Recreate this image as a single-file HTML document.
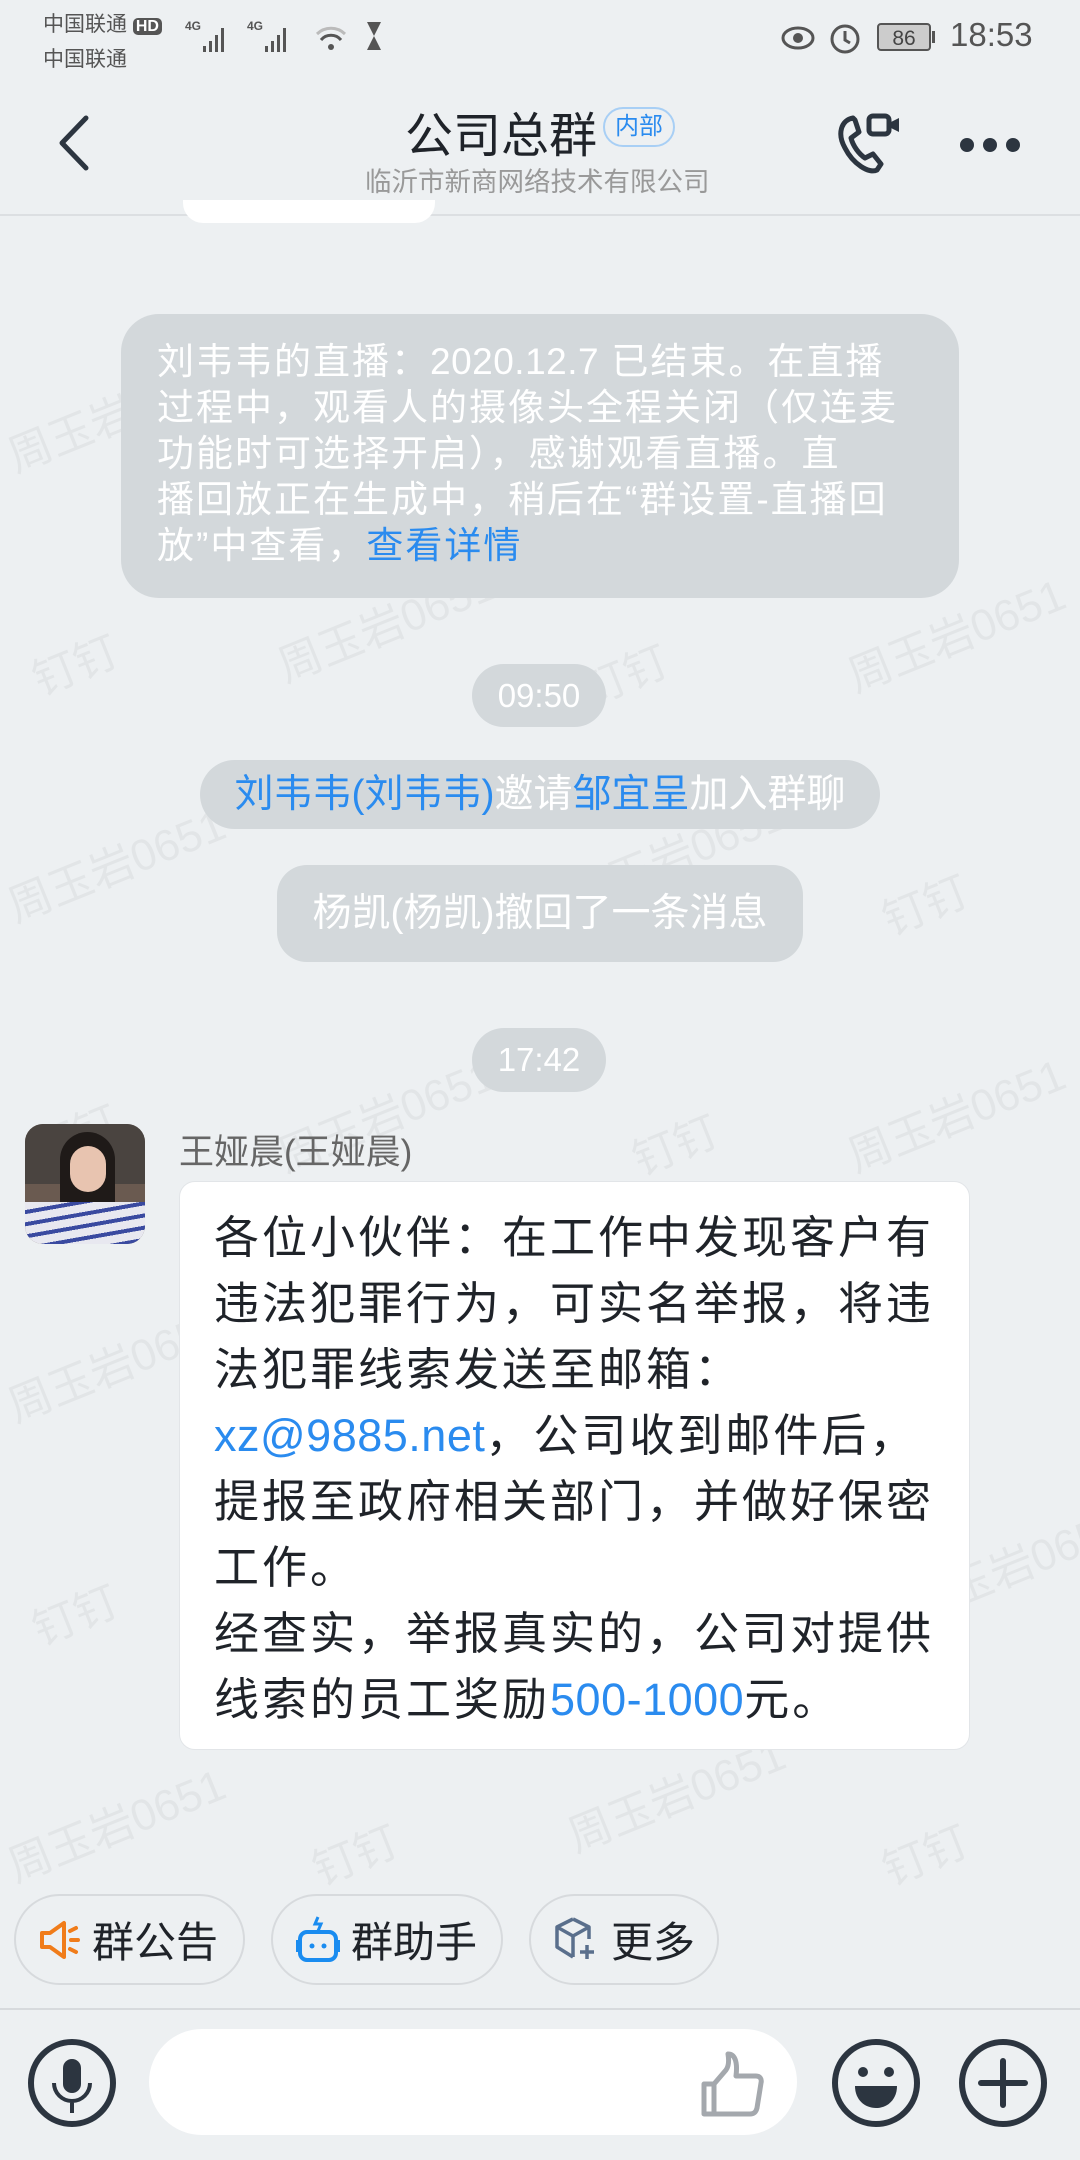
<!DOCTYPE html>
<html><head><meta charset="utf-8">
<style>
*{margin:0;padding:0;box-sizing:border-box}
body{width:1080px;height:2160px;background:#edf0f2;font-family:"Liberation Sans","Noto Sans CJK SC",sans-serif;position:relative;overflow:hidden;color:#1f2329}
.a{position:absolute}
.wm{position:absolute;color:rgba(0,0,0,0.045);font-size:44px;transform:rotate(-22deg);white-space:nowrap}
.pill{position:absolute;background:#d3d8db;color:#fff;text-align:center;white-space:nowrap}
.blue{color:#2a8bef}
.l{letter-spacing:0.5px}
.chip{position:absolute;top:1894px;height:91px;border:2px solid #d7dadd;border-radius:46px;font-size:42px;display:flex;align-items:center;color:#1f2329}
</style></head><body>

<div class="wm" style="left:0;top:380px">周玉岩0651</div>
<div class="wm" style="left:860px;top:390px">钉钉</div>
<div class="wm" style="left:30px;top:630px">钉钉</div>
<div class="wm" style="left:270px;top:590px">周玉岩0651</div>
<div class="wm" style="left:580px;top:640px">钉钉</div>
<div class="wm" style="left:840px;top:600px">周玉岩0651</div>
<div class="wm" style="left:0;top:830px">周玉岩0651</div>
<div class="wm" style="left:310px;top:870px">钉钉</div>
<div class="wm" style="left:560px;top:820px">周玉岩0651</div>
<div class="wm" style="left:880px;top:870px">钉钉</div>
<div class="wm" style="left:30px;top:1100px">钉钉</div>
<div class="wm" style="left:270px;top:1080px">周玉岩0651</div>
<div class="wm" style="left:630px;top:1110px">钉钉</div>
<div class="wm" style="left:840px;top:1080px">周玉岩0651</div>
<div class="wm" style="left:0;top:1330px">周玉岩0651</div>
<div class="wm" style="left:30px;top:1580px">钉钉</div>
<div class="wm" style="left:900px;top:1530px">周玉岩0651</div>
<div class="wm" style="left:0;top:1790px">周玉岩0651</div>
<div class="wm" style="left:310px;top:1820px">钉钉</div>
<div class="wm" style="left:560px;top:1760px">周玉岩0651</div>
<div class="wm" style="left:880px;top:1820px">钉钉</div>

<div class="a" style="left:43px;top:8px;font-size:21px;color:#555;line-height:33px">中国联通 <span style="background:#555;color:#fff;border-radius:5px;font-size:16px;padding:0 3px;font-weight:bold">HD</span><br>中国联通</div>
<svg class="a" style="left:185px;top:16px" width="210" height="40" viewBox="0 0 210 40">
<text x="0" y="14" font-size="12" font-weight="bold" fill="#555" font-family="Liberation Sans">4G</text>
<rect x="18" y="30" width="3" height="6" fill="#555"/><rect x="24" y="25" width="3" height="11" fill="#555"/><rect x="30" y="19" width="3" height="17" fill="#555"/><rect x="36" y="12" width="3" height="24" fill="#555"/>
<text x="62" y="14" font-size="12" font-weight="bold" fill="#555" font-family="Liberation Sans">4G</text>
<rect x="80" y="30" width="3" height="6" fill="#555"/><rect x="86" y="25" width="3" height="11" fill="#555"/><rect x="92" y="19" width="3" height="17" fill="#555"/><rect x="98" y="12" width="3" height="24" fill="#555"/>
<path d="M132 18 a20 20 0 0 1 28 0" stroke="#bbb" stroke-width="3" fill="none"/><path d="M136 24 a13 13 0 0 1 20 0" stroke="#555" stroke-width="3" fill="none"/><circle cx="146" cy="31" r="3" fill="#555"/>
<path d="M182 6 h14 l-7 14 l7 14 h-14 l7 -14z" fill="#555"/>
</svg>
<svg class="a" style="left:778px;top:18px" width="165" height="40" viewBox="0 0 165 40">
<ellipse cx="20" cy="20" rx="15" ry="10" stroke="#555" stroke-width="3" fill="none"/><circle cx="20" cy="20" r="5" fill="#555"/>
<circle cx="67" cy="21" r="13" stroke="#555" stroke-width="3" fill="none"/><path d="M67 13 v9 l5 3" stroke="#555" stroke-width="3" fill="none"/>
<rect x="100" y="6" width="52" height="26" rx="3" stroke="#555" stroke-width="2" fill="#ccc"/><rect x="154" y="13" width="3" height="12" fill="#555"/>
<text x="126" y="27" text-anchor="middle" font-size="21" fill="#444" font-family="Liberation Sans">86</text>
</svg>
<div class="a" style="left:950px;top:16px;font-size:33px;color:#555">18:53</div>

<svg class="a" style="left:52px;top:113px" width="40" height="60"><path d="M34 5 L10 30 L34 55" stroke="#2c3540" stroke-width="5" fill="none" stroke-linecap="round" stroke-linejoin="round"/></svg>
<div class="a" style="left:405px;top:96px;font-size:48px;color:#1f2329">公司总群</div>
<div class="a" style="left:603px;top:107px;width:72px;height:40px;border:2px solid #a8cff5;border-radius:20px;color:#2a8bef;font-size:24px;text-align:center;line-height:36px">内部</div>
<div class="a" style="left:365px;top:160px;font-size:26.5px;color:#999">临沂市新商网络技术有限公司</div>
<svg class="a" style="left:835px;top:110px" width="70" height="70" viewBox="0 0 70 70">
<path d="M18 8 C6 10 2 24 10 38 C18 54 34 64 42 60 L46 54 L38 44 L30 48 C24 44 18 36 16 28 L24 22 L20 10 Z" stroke="#2c3540" stroke-width="5" fill="none" stroke-linejoin="round"/>
<rect x="34" y="6" width="20" height="18" rx="4" stroke="#2c3540" stroke-width="5" fill="none"/><path d="M56 12 L64 8 V22 L56 18Z" fill="#2c3540"/>
</svg>
<div class="a" style="left:960px;top:138px;width:14px;height:14px;border-radius:7px;background:#2c3540;box-shadow:23px 0 0 #2c3540,46px 0 0 #2c3540"></div>
<div class="a" style="left:0;top:214px;width:1080px;height:2px;background:#dcdfe2"></div>
<div class="a" style="left:183px;top:200px;width:252px;height:23px;background:#fff;border-radius:0 0 20px 20px"></div>

<div class="a" style="left:121px;top:314px;width:838px;height:284px;background:#d3d8db;border-radius:38px"></div>
<div class="a" style="left:157px;top:339px;font-size:37px;letter-spacing:2px;line-height:46px;color:#fff;white-space:nowrap">刘韦韦的直播：<span class="l">2020.12.7</span> 已结束。在直播<br>过程中，观看人的摄像头全程关闭（仅连麦<br>功能时可选择开启），感谢观看直播。直<br>播回放正在生成中，稍后在“群设置-直播回<br>放”中查看，<span class="blue">查看详情</span></div>

<div class="pill" style="left:472px;top:664px;width:134px;height:63px;border-radius:32px;font-size:33px;line-height:63px">09:50</div>
<div class="pill" style="left:200px;top:760px;width:680px;height:69px;border-radius:35px;font-size:39px;line-height:69px"><span class="blue">刘韦韦(刘韦韦)</span>邀请<span class="blue">邹宜呈</span>加入群聊</div>
<div class="pill" style="left:277px;top:865px;width:526px;height:97px;border-radius:30px;font-size:39px;line-height:97px">杨凯(杨凯)撤回了一条消息</div>
<div class="pill" style="left:472px;top:1028px;width:134px;height:64px;border-radius:32px;font-size:33px;line-height:64px">17:42</div>

<div class="a" style="left:25px;top:1124px;width:120px;height:120px;border-radius:18px;overflow:hidden;background:#6a5a50">
<div class="a" style="left:0;top:0;width:120px;height:60px;background:#4a4440"></div>
<div class="a" style="left:35px;top:8px;width:55px;height:100px;border-radius:28px;background:#1f1a18"></div>
<div class="a" style="left:45px;top:22px;width:36px;height:46px;border-radius:18px;background:#e8c4b0"></div>
<div class="a" style="left:0;top:78px;width:120px;height:42px;background:repeating-linear-gradient(170deg,#e8e8f0 0 8px,#3a4aa0 8px 12px)"></div>
</div>
<div class="a" style="left:179px;top:1124px;font-size:35px;color:#666">王娅晨(王娅晨)</div>

<div class="a" style="left:179px;top:1181px;width:791px;height:569px;background:#fff;border-radius:16px;border:1px solid #e2e5e8"></div>
<div class="a" style="left:214px;top:1205px;font-size:45px;letter-spacing:3px;line-height:66px;color:#1f2329;white-space:nowrap">各位小伙伴：在工作中发现客户有<br>违法犯罪行为，可实名举报，将违<br>法犯罪线索发送至邮箱：<br><span class="blue l">xz@9885.net</span>，公司收到邮件后，<br>提报至政府相关部门，并做好保密<br>工作。<br>经查实，举报真实的，公司对提供<br>线索的员工奖励<span class="blue l">500-1000</span>元。</div>

<div class="chip" style="left:14px;width:231px">
<svg style="margin-left:20px" width="46" height="46" viewBox="0 0 46 46"><path d="M6 16 h8 l14 -10 v34 l-14 -10 h-8z" stroke="#f07c1a" stroke-width="4" fill="none" stroke-linejoin="round"/><path d="M34 14 l6 -3 M35 23 h7 M34 32 l6 3" stroke="#f07c1a" stroke-width="4" stroke-linecap="round"/></svg>
<span style="margin-left:10px">群公告</span></div>
<div class="chip" style="left:271px;width:232px">
<svg style="margin-left:22px" width="46" height="50" viewBox="0 0 46 50"><path d="M23 2 l-3 7 h6 l-3 7" stroke="#1a8cf0" stroke-width="3" fill="none"/><rect x="5" y="17" width="36" height="28" rx="7" stroke="#1a8cf0" stroke-width="4" fill="none"/><circle cx="17" cy="31" r="2.5" fill="#1a8cf0"/><circle cx="29" cy="31" r="2.5" fill="#1a8cf0"/><rect x="1" y="25" width="4" height="12" fill="#1a8cf0"/><rect x="41" y="25" width="4" height="12" fill="#1a8cf0"/></svg>
<span style="margin-left:10px">群助手</span></div>
<div class="chip" style="left:529px;width:190px">
<svg style="margin-left:22px" width="46" height="50" viewBox="0 0 46 50"><path d="M20 4 l16 8 v12 M20 4 l-16 8 v20 l16 10 M4 12 l16 9 l16 -9 M20 21 v21" stroke="#5a6f8c" stroke-width="3.5" fill="none" stroke-linejoin="round"/><path d="M34 30 v14 M27 37 h14" stroke="#5a6f8c" stroke-width="3.5"/></svg>
<span style="margin-left:12px">更多</span></div>

<div class="a" style="left:0;top:2008px;width:1080px;height:2px;background:#d7dadd"></div>

<svg class="a" style="left:26px;top:2037px" width="92" height="92" viewBox="0 0 92 92"><circle cx="46" cy="46" r="41" stroke="#2c3540" stroke-width="6" fill="none"/><rect x="37" y="22" width="18" height="34" rx="9" fill="#2c3540"/><path d="M28 46 a18 18 0 0 0 36 0 M46 64 v12" stroke="#2c3540" stroke-width="4" fill="none"/></svg>
<div class="a" style="left:149px;top:2029px;width:648px;height:106px;background:#fff;border-radius:53px"></div>
<svg class="a" style="left:700px;top:2049px" width="70" height="70" viewBox="0 0 70 70"><path d="M4 35 h10 v30 h-10z M14 35 l12 -14 c3 -4 3 -10 2 -16 c6 0 10 6 8 22 h20 c4 0 6 3 5 7 l-4 25 c-1 4 -3 6 -7 6 h-24 l-12 0" stroke="#a4a8ad" stroke-width="5" fill="none" stroke-linejoin="round"/></svg>
<svg class="a" style="left:830px;top:2037px" width="92" height="92" viewBox="0 0 92 92"><circle cx="46" cy="46" r="41" stroke="#2c3540" stroke-width="6" fill="none"/><circle cx="33" cy="35" r="5" fill="#2c3540"/><circle cx="59" cy="35" r="5" fill="#2c3540"/><path d="M25 49 h42 c0 14 -10 22 -21 22 c-11 0 -21 -8 -21 -22z" fill="#2c3540"/></svg>
<svg class="a" style="left:957px;top:2037px" width="92" height="92" viewBox="0 0 92 92"><circle cx="46" cy="46" r="41" stroke="#2c3540" stroke-width="6" fill="none"/><path d="M46 24 v44 M24 46 h44" stroke="#2c3540" stroke-width="6" stroke-linecap="round"/></svg>

</body></html>
